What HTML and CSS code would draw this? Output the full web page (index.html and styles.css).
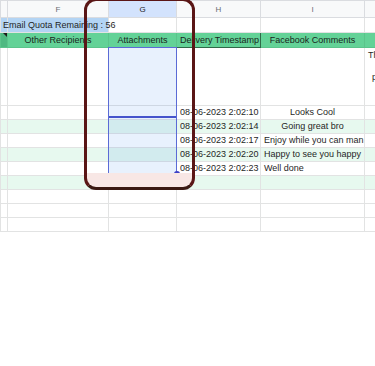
FILE: index.html
```html
<!DOCTYPE html>
<html lang="en">
<head>
    <meta charset="UTF-8">
    <meta name="viewport" content="width=device-width, initial-scale=1.0">
    <title>Comments Sheet</title>
    <link rel="stylesheet" href="styles.css">
</head>
<body>
    <div class="sheet">
        <table class="grid">
            <colgroup>
                <col class="col-e">
                <col class="col-f">
                <col class="col-g">
                <col class="col-h">
                <col class="col-i">
                <col class="col-j">
            </colgroup>
            <tr class="col-head">
                <th></th>
                <th>F</th>
                <th class="picked">G</th>
                <th>H</th>
                <th>I</th>
                <th></th>
            </tr>
            <tr class="row-quota">
                <td class="quota"><span>Email Quota Remaining : 56</span></td>
                <td class="quota"></td>
                <td></td>
                <td></td>
                <td></td>
                <td></td>
            </tr>
            <tr class="row-head">
                <td class="note"></td>
                <td>Other Recipients</td>
                <td>Attachments</td>
                <td class="boxed">Delivery Timestamp</td>
                <td>Facebook Comments</td>
                <td></td>
            </tr>
            <tr class="row-tall">
                <td></td>
                <td></td>
                <td></td>
                <td></td>
                <td></td>
                <td class="wrapped">
                    <div>Th</div>
                    <div>&nbsp;</div>
                    <div class="indent">p</div>
                </td>
            </tr>
            <tr>
                <td></td><td></td><td></td>
                <td>08-06-2023 2:02:10</td>
                <td class="center">Looks Cool</td>
                <td></td>
            </tr>
            <tr class="alt">
                <td></td><td></td><td></td>
                <td>08-06-2023 2:02:14</td>
                <td class="center">Going great bro</td>
                <td></td>
            </tr>
            <tr>
                <td></td><td></td><td></td>
                <td>08-06-2023 2:02:17</td>
                <td>Enjoy while you can man</td>
                <td></td>
            </tr>
            <tr class="alt">
                <td></td><td></td><td></td>
                <td>08-06-2023 2:02:20</td>
                <td>Happy to see you happy</td>
                <td></td>
            </tr>
            <tr>
                <td></td><td></td><td></td>
                <td>08-06-2023 2:02:23</td>
                <td>Well done</td>
                <td></td>
            </tr>
            <tr class="alt">
                <td></td><td></td><td></td><td></td><td></td><td></td>
            </tr>
            <tr>
                <td></td><td></td><td></td><td></td><td></td><td></td>
            </tr>
            <tr>
                <td></td><td></td><td></td><td></td><td></td><td></td>
            </tr>
            <tr>
                <td></td><td></td><td></td><td></td><td></td><td></td>
            </tr>
        </table>

        <!-- range selection over column G -->
        <div class="selection">
            <div class="active-cell"></div>
            <span class="handle"></span>
        </div>

        <!-- hand-drawn highlight round the column -->
        <div class="callout"></div>
    </div>
</body>
</html>
```

FILE: styles.css
```css
body {
    margin: 0;
    background-color: white;
    font-family: "Liberation Sans", Arial, sans-serif;
}
.sheet {
    position: relative;
    width: 375px;
    height: 366px;
    overflow: hidden;
}
.grid {
    border-collapse: collapse;
    table-layout: fixed;
    width: 394px;
    font-size: 9px;
    color: #1f1f1f;
}
.col-e { width: 7px; }
.col-f { width: 101px; }
.col-g { width: 68px; }
.col-h { width: 84px; }
.col-i { width: 104px; }
.col-j { width: 30px; }
.grid th,
.grid td {
    border: 1px solid #e2e3e3;
    padding: 0 3px;
    white-space: nowrap;
    overflow: visible;
    line-height: 11px;
    height: 13px;
    text-align: left;
    vertical-align: middle;
}
.col-head th {
    height: 16px;
    background-color: #f8f9fa;
    border-color: #dadce0;
    color: #6b6f74;
    font-size: 8px;
    font-weight: normal;
    text-align: center;
}
.col-head th.picked {
    background-color: #d3e3fd;
    color: #202124;
}
.row-quota td {
    height: 14px;
}
.quota {
    background-color: #b3d4f4;
}
.quota span {
    position: relative;
    left: -1px;
}
.row-head td {
    height: 14px;
    background-color: #63d297;
    border-color: #5bc48b;
    color: #1a2520;
    text-align: center;
}
.row-head td.note {
    position: relative;
    background-color: #4fb982;
}
.row-head td.note::after {
    content: "";
    position: absolute;
    top: 0;
    right: 0;
    border-top: 4px solid #1b1b1b;
    border-left: 4px solid transparent;
}
.row-head td.boxed {
    border: 1px solid #2f6a48;
}
.row-tall td {
    height: 55px;
}
.wrapped {
    vertical-align: top !important;
    padding-top: 2px !important;
}
.wrapped .indent {
    padding-left: 4px;
}
.alt td {
    background-color: #e7f9ef;
}
.center {
    text-align: center !important;
}
.selection {
    position: absolute;
    left: 108px;
    top: 47px;
    width: 67px;
    height: 125px;
    border: 1px solid #5b6bd6;
    background-color: rgba(26, 115, 232, 0.1);
}
.active-cell {
    height: 68px;
    border-bottom: 2px solid #4654cc;
}
.handle {
    position: absolute;
    right: -4px;
    bottom: -4px;
    width: 6px;
    height: 6px;
    border-radius: 50%;
    background-color: #3c40c6;
}
.callout {
    position: absolute;
    left: 84px;
    top: -2px;
    width: 105px;
    height: 186px;
    border: 3px solid #5a1616;
    border-bottom-color: #3b1812;
    border-radius: 12px;
    background: linear-gradient(to bottom, transparent 172px, #f8e7e5 172px);
}
```
